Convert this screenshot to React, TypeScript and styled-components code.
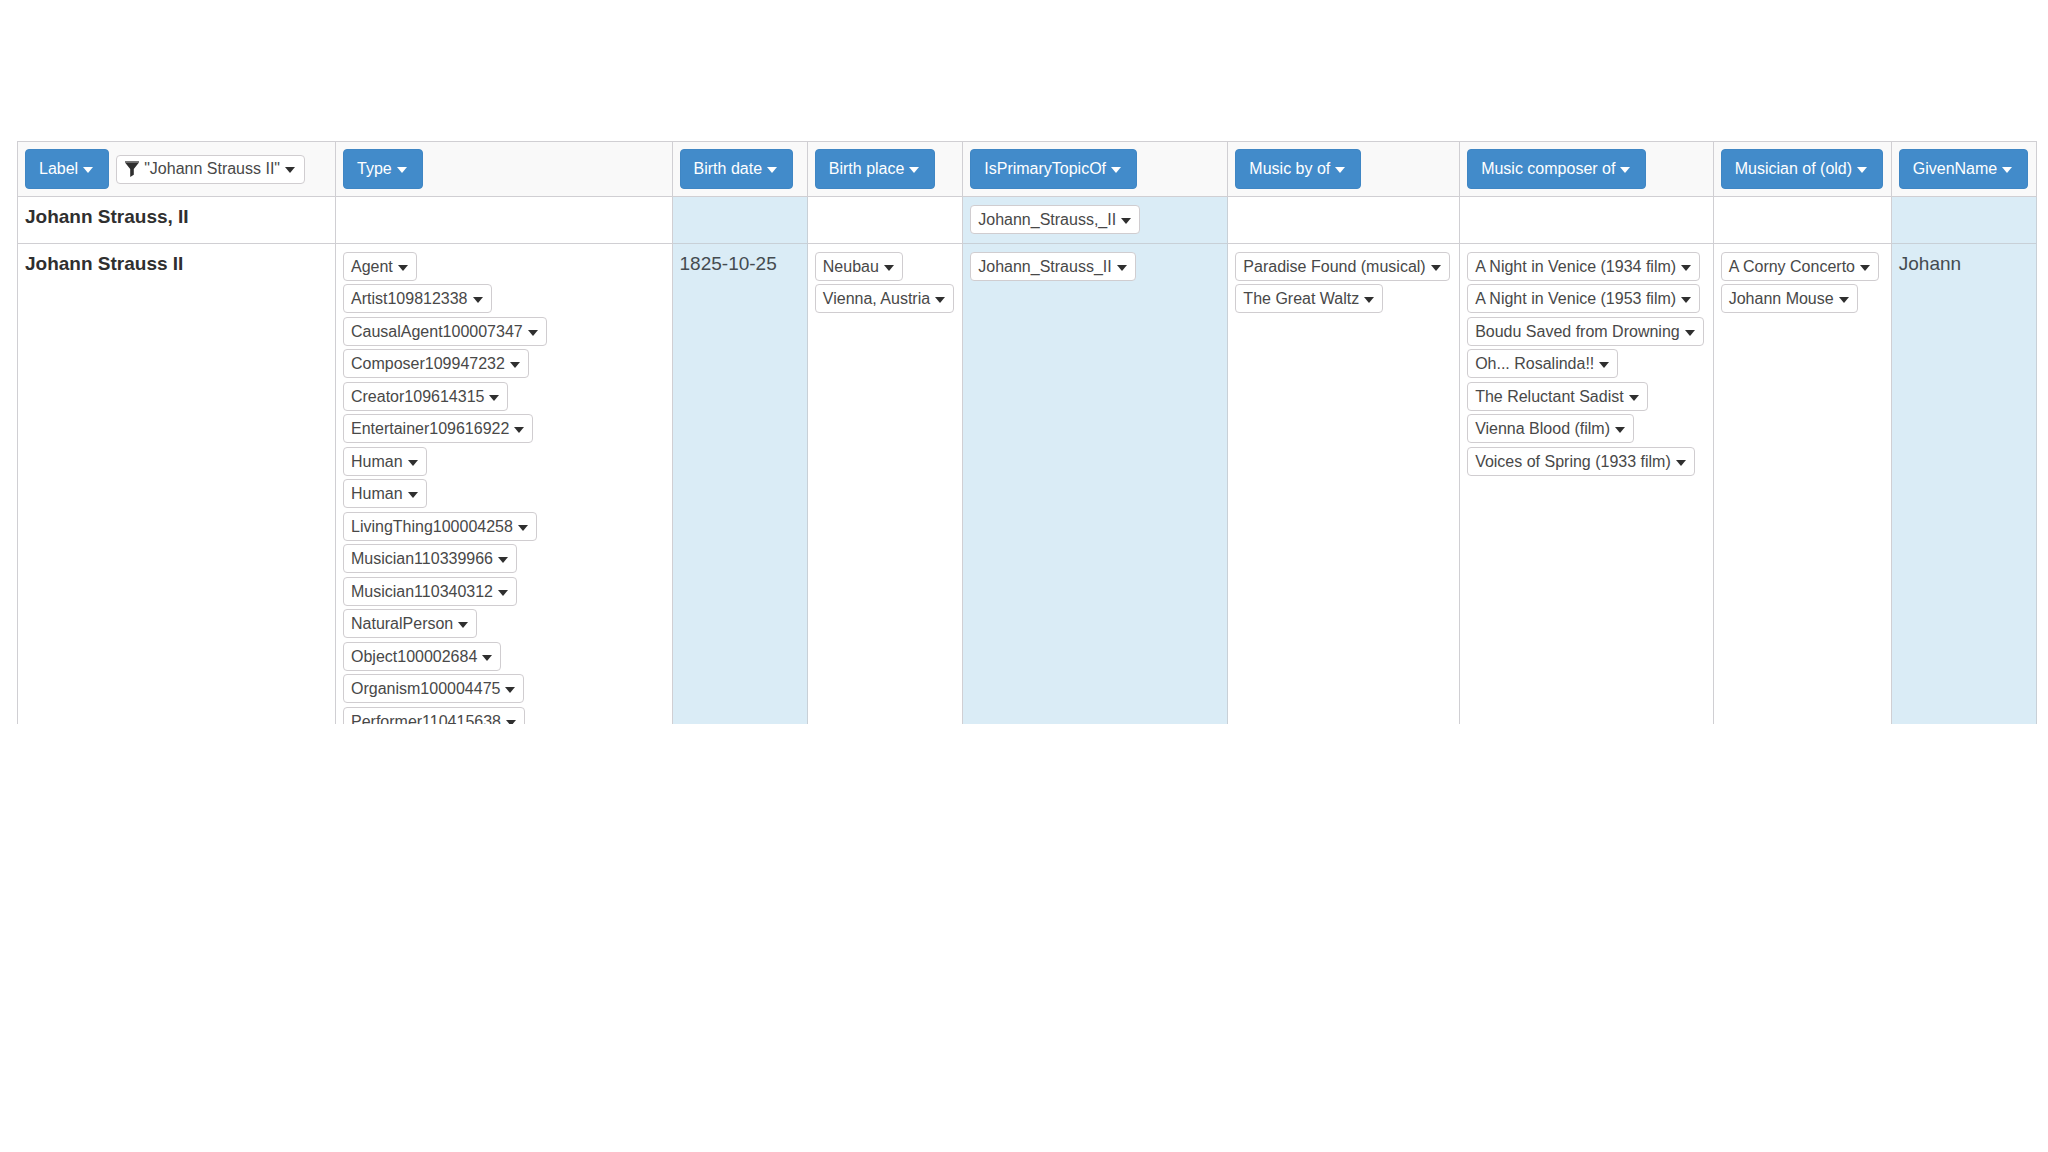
import React from "react";
import styled, { createGlobalStyle } from "styled-components";

const GlobalStyle = createGlobalStyle`
  *, *::before, *::after { box-sizing: border-box; }
  body {
    margin: 0;
    background: #fff;
    color: #333;
    font-family: "Liberation Sans", Arial, sans-serif;
    font-size: 19px;
    line-height: 26px;
  }
`;

const Page = styled.main`
  padding: 141px 11px 0 17px;
`;

const TableFrame = styled.div`
  max-height: 583px;
  overflow: hidden;
`;

const Table = styled.table`
  width: 100%;
  table-layout: fixed;
  border-collapse: collapse;
`;

const Column = styled.col<{ $share: number }>`
  width: ${(p) => p.$share}%;
`;

const HeadCell = styled.th`
  padding: 7px 6px 7px 7px;
  border: 1px solid #d0cfd3;
  background: #f9f9f9;
  text-align: left;
  font-weight: 400;
  white-space: nowrap;
`;

const HeadControls = styled.div`
  display: flex;
  align-items: center;
  gap: 7px;
`;

const Cell = styled.td<{ $literal?: boolean }>`
  padding: 7px 6px 6px 7px;
  border: 1px solid ${(p) => (p.$literal ? "#c8d0d7" : "#d0cfd3")};
  background: ${(p) => (p.$literal ? "#daecf6" : "#fff")};
  color: ${(p) => (p.$literal ? "#444b50" : "#333")};
  vertical-align: top;
  white-space: nowrap;
`;

const RowLabel = styled.th`
  padding: 7px 6px 6px 7px;
  border: 1px solid #d0cfd3;
  text-align: left;
  vertical-align: top;
  font-weight: 700;
  color: #2f2f2f;
  white-space: nowrap;
`;

const Button = styled.button`
  display: flex;
  align-items: center;
  gap: 5px;
  font-family: inherit;
  font-size: 16px;
  white-space: nowrap;
  cursor: pointer;
`;

const PropertyButton = styled(Button)`
  height: 40px;
  padding: 0 15px 0 13px;
  border: 1px solid #3f86c4;
  border-radius: 4px;
  background: #428bca;
  color: #fff;
`;

const ChipButton = styled(Button)`
  height: 29px;
  padding: 0 8px 0 7px;
  border: 1px solid #d0cdd0;
  border-radius: 4px;
  background: #fff;
  color: #484848;
`;

const Caret = styled.span<{ $dark?: boolean }>`
  margin-top: 2px;
  border-top: 6px solid ${(p) => (p.$dark ? "#2f2f2f" : "#fff")};
  border-left: 5px solid transparent;
  border-right: 5px solid transparent;
`;

const FilterChip = styled(ChipButton)`
  padding: 0 9px 0 8px;
`;

const ChipList = styled.ul`
  margin: 0;
  padding: 1px 0 0;
  list-style: none;
`;

const ChipItem = styled.li`
  display: flex;
  margin-bottom: 3px;

  &:nth-child(even) {
    margin-bottom: 4px;
  }
`;

function FilterIcon() {
  return (
    <svg width="14" height="17" viewBox="0 0 14 17" aria-hidden="true">
      <path d="M0 0h14v1.6H0z" fill="#777" />
      <path d="M0 1.6h14L8.8 8v5.8L5.2 16V8z" fill="#2f2f2f" />
    </svg>
  );
}

function Chip({ children }: { children: string }) {
  return (
    <ChipButton type="button">
      {children}
      <Caret $dark />
    </ChipButton>
  );
}

type Values = string[] | string;

const columns: { name: string; share: number; literal?: boolean; filter?: string }[] = [
  { name: "Label", share: 15.75, filter: '"Johann Strauss II"' },
  { name: "Type", share: 16.67 },
  { name: "Birth date", share: 6.7, literal: true },
  { name: "Birth place", share: 7.7 },
  { name: "IsPrimaryTopicOf", share: 13.13, literal: true },
  { name: "Music by of", share: 11.48 },
  { name: "Music composer of", share: 12.56 },
  { name: "Musician of (old)", share: 8.82 },
  { name: "GivenName", share: 7.19, literal: true },
];

const rows: { label: string; values: Values[] }[] = [
  {
    label: "Johann Strauss, II",
    values: ["", "", "", ["Johann_Strauss,_II"], "", "", "", ""],
  },
  {
    label: "Johann Strauss II",
    values: [
      [
        "Agent",
        "Artist109812338",
        "CausalAgent100007347",
        "Composer109947232",
        "Creator109614315",
        "Entertainer109616922",
        "Human",
        "Human",
        "LivingThing100004258",
        "Musician110339966",
        "Musician110340312",
        "NaturalPerson",
        "Object100002684",
        "Organism100004475",
        "Performer110415638",
      ],
      "1825-10-25",
      ["Neubau", "Vienna, Austria"],
      ["Johann_Strauss_II"],
      ["Paradise Found (musical)", "The Great Waltz"],
      [
        "A Night in Venice (1934 film)",
        "A Night in Venice (1953 film)",
        "Boudu Saved from Drowning",
        "Oh... Rosalinda!!",
        "The Reluctant Sadist",
        "Vienna Blood (film)",
        "Voices of Spring (1933 film)",
      ],
      ["A Corny Concerto", "Johann Mouse"],
      "Johann",
    ],
  },
];

function CellContent({ values }: { values: Values }) {
  if (typeof values === "string") return <>{values}</>;
  return (
    <ChipList>
      {values.map((value, i) => (
        <ChipItem key={i}>
          <Chip>{value}</Chip>
        </ChipItem>
      ))}
    </ChipList>
  );
}

export default function App() {
  return (
    <>
      <GlobalStyle />
      <Page>
        <TableFrame>
          <Table>
            <colgroup>
              {columns.map((c) => (
                <Column key={c.name} $share={c.share} />
              ))}
            </colgroup>
            <thead>
              <tr>
                {columns.map((c) => (
                  <HeadCell key={c.name} scope="col">
                    <HeadControls>
                      <PropertyButton type="button">
                        {c.name}
                        <Caret />
                      </PropertyButton>
                      {c.filter && (
                        <FilterChip type="button">
                          <FilterIcon />
                          {c.filter}
                          <Caret $dark />
                        </FilterChip>
                      )}
                    </HeadControls>
                  </HeadCell>
                ))}
              </tr>
            </thead>
            <tbody>
              {rows.map((row) => (
                <tr key={row.label}>
                  <RowLabel scope="row">{row.label}</RowLabel>
                  {row.values.map((values, i) => (
                    <Cell key={i} $literal={columns[i + 1].literal}>
                      <CellContent values={values} />
                    </Cell>
                  ))}
                </tr>
              ))}
            </tbody>
          </Table>
        </TableFrame>
      </Page>
    </>
  );
}
